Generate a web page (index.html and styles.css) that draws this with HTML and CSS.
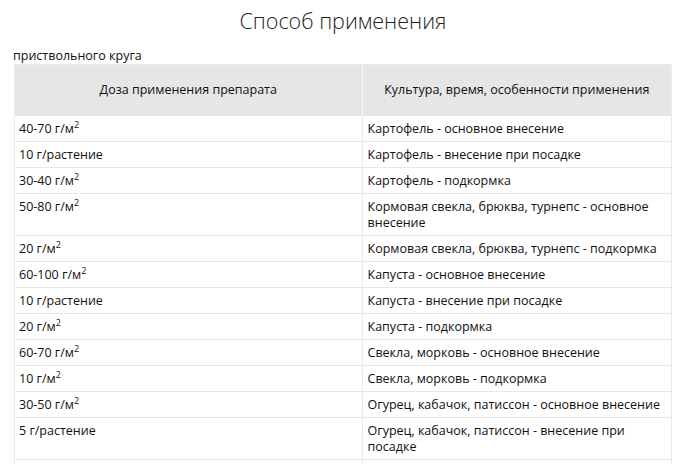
FILE: index.html
```html
<!DOCTYPE html>
<html lang="ru">
<head>
<meta charset="utf-8">
<link rel="stylesheet" href="styles.css">
</head>
<body>
<div class="page">
  <h1 class="title">Способ применения</h1>
  <p class="lead">приствольного круга</p>
  <table class="usage">
    <colgroup><col class="col-dose"><col class="col-crop"></colgroup>
    <thead>
      <tr><th>Доза применения препарата</th><th>Культура, время, особенности применения</th></tr>
    </thead>
    <tbody>
      <tr><td>40-70 г/м<sup class="sq">2</sup></td><td>Картофель - основное внесение</td></tr>
      <tr><td>10 г/растение</td><td>Картофель - внесение при посадке</td></tr>
      <tr><td>30-40 г/м<sup class="sq">2</sup></td><td>Картофель - подкормка</td></tr>
      <tr><td>50-80 г/м<sup class="sq">2</sup></td><td>Кормовая свекла, брюква, турнепс - основное внесение</td></tr>
      <tr><td>20 г/м<sup class="sq">2</sup></td><td>Кормовая свекла, брюква, турнепс - подкормка</td></tr>
      <tr><td>60-100 г/м<sup class="sq">2</sup></td><td>Капуста - основное внесение</td></tr>
      <tr><td>10 г/растение</td><td>Капуста - внесение при посадке</td></tr>
      <tr><td>20 г/м<sup class="sq">2</sup></td><td>Капуста - подкормка</td></tr>
      <tr><td>60-70 г/м<sup class="sq">2</sup></td><td>Свекла, морковь - основное внесение</td></tr>
      <tr><td>10 г/м<sup class="sq">2</sup></td><td>Свекла, морковь - подкормка</td></tr>
      <tr><td>30-50 г/м<sup class="sq">2</sup></td><td>Огурец, кабачок, патиссон - основное внесение</td></tr>
      <tr><td>5 г/растение</td><td>Огурец, кабачок, патиссон - внесение при посадке</td></tr>
      <tr><td>10 г/м<sup class="sq">2</sup></td><td>Огурец, кабачок, патиссон - подкормка</td></tr>
    </tbody>
  </table>
</div>
</body>
</html>
```
FILE: styles.css
```css
html, body {
  margin: 0;
  padding: 0;
  background: #fff;
}
body {
  font-family: "Open Sans", "Liberation Sans", sans-serif;
  color: #111;
  font-size: 12.5px;
}
.page {
  padding: 0 8px 0 14px;
}
.title {
  margin: 0;
  padding-top: 6px;
  font-size: 21.5px;
  line-height: 30px;
  font-weight: 300;
  text-align: center;
  color: #222;
}
.lead {
  margin: 12px 0 0 -1px;
  line-height: 16px;
}
.usage {
  width: 658px;
  box-sizing: border-box;
  border-collapse: collapse;
  table-layout: fixed;
  border: 1px solid #ececec;
}
.col-dose { width: 52.9%; }
.col-crop { width: 47.1%; }
.usage th {
  background: #e6e6e6;
  font-weight: 400;
  line-height: 16px;
  padding: 17px 5px;
  text-align: center;
  border-right: 1px solid #f7f7f7;
  color: #111;
}
.usage th:last-child { border-right: 1px solid #ececec; }
.usage td {
  padding: 5px 4px 4px 4px;
  line-height: 16px;
  border: 1px solid #e8e8e8;
  vertical-align: top;
}
.usage td:last-child { padding-left: 5px; }
.sq {
  font-size: 9px;
  line-height: 0;
  vertical-align: 5px;
}
```
